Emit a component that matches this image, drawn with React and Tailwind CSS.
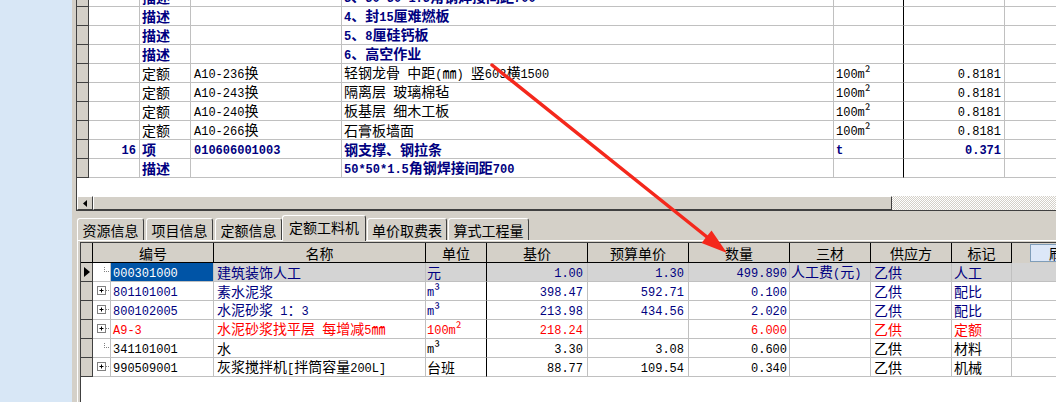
import React from "react";

const topRows = [
  { type: "描述", name: "3、50*50*1.5角钢焊接间距700", bold: true },
  { type: "描述", name: "4、封15厘难燃板", bold: true },
  { type: "描述", name: "5、8厘硅钙板", bold: true },
  { type: "描述", name: "6、高空作业", bold: true },
  { type: "定额", code: "A10-236换", name: "轻钢龙骨 中距(㎜) 竖603横1500", unit: "100m²", qty: "0.8181" },
  { type: "定额", code: "A10-243换", name: "隔离层 玻璃棉毡", unit: "100m²", qty: "0.8181" },
  { type: "定额", code: "A10-240换", name: "板基层 细木工板", unit: "100m²", qty: "0.8181" },
  { type: "定额", code: "A10-266换", name: "石膏板墙面", unit: "100m²", qty: "0.8181" },
  { num: "16", type: "项", code: "010606001003", name: "钢支撑、钢拉条", unit: "t", qty: "0.371", bold: true },
  { type: "描述", name: "50*50*1.5角钢焊接间距700", bold: true },
];

const botRows = [
  { tree: "leaf", code: "000301000", name: "建筑装饰人工", unit: "元", base: "1.00", price: "1.30", qty: "499.890", sancai: "人工费(元)", sup: "乙供", mark: "人工", color: "navy", selected: true },
  { tree: "plus", code: "801101001", name: "素水泥浆", unit: "m³", base: "398.47", price: "592.71", qty: "0.100", sup: "乙供", mark: "配比", color: "navy" },
  { tree: "plus", code: "800102005", name: "水泥砂浆 1：3", unit: "m³", base: "213.98", price: "434.56", qty: "2.020", sup: "乙供", mark: "配比", color: "navy" },
  { tree: "plus", code: "A9-3", name: "水泥砂浆找平层 每增减5㎜", unit: "100m²", base: "218.24", price: "", qty: "6.000", sup: "乙供", mark: "定额", color: "red" },
  { tree: "leaf", code: "341101001", name: "水", unit: "m³", base: "3.30", price: "3.08", qty: "0.600", sup: "乙供", mark: "材料", color: "black" },
  { tree: "plus", code: "990509001", name: "灰浆搅拌机[拌筒容量200L]", unit: "台班", base: "88.77", price: "109.54", qty: "0.340", sup: "乙供", mark: "机械", color: "black" },
];

const colors = {
  navy: "text-[#000080]",
  red: "text-[#ff0000]",
  black: "text-black",
};

// ascii runs in a narrow mono face, the rest in the CJK face
function Txt({ s }) {
  if (!s) return null;
  return (
    <span className="leading-[16px]">
      {s
        .split(/([\x20-\x7e]+)/)
        .filter(Boolean)
        .map((p, i) =>
          /^[\x20-\x7e]+$/.test(p) ? (
            <span key={i} className="font-['Liberation_Mono'] text-[12px]">
              {p}
            </span>
          ) : (
            <span key={i}>{p}</span>
          )
        )}
    </span>
  );
}

const cell = "flex shrink-0 items-center whitespace-pre border-r border-b border-[#c0c0c0]";

function TopRow({ r }) {
  return (
    <div className={`flex h-[19px] shrink-0 ${r.bold ? "font-bold text-[#000080]" : "text-black"}`}>
      <div className="w-[12px] shrink-0 border-r border-b border-[#404040] bg-[#d4d0c8]" />
      <div className={`${cell} w-[51px] justify-end pr-[3px]`}>
        <Txt s={r.num} />
      </div>
      <div className={`${cell} w-[51px] pl-[2px]`}>
        <Txt s={r.type} />
      </div>
      <div className={`${cell} w-[151px] pl-[3px]`}>
        <Txt s={r.code} />
      </div>
      <div className={`${cell} w-[492px] pl-[2px]`}>
        <Txt s={r.name} />
      </div>
      <div className={`${cell} w-[70px] border-r-black pl-[2px]`}>
        <Txt s={r.unit} />
      </div>
      <div className={`${cell} w-[101px] justify-end pr-[3px]`}>
        <Txt s={r.qty} />
      </div>
      <div className="flex-1 border-b border-[#c0c0c0]" />
    </div>
  );
}

function ScrollBar() {
  return (
    <div className="flex h-[14px] shrink-0">
      <div className="flex w-[16px] shrink-0 items-center justify-center border border-t-white border-l-white border-r-[#404040] border-b-[#404040] bg-[#d4d0c8]">
        <svg width="4" height="7" viewBox="0 0 4 7">
          <polygon points="4,0 0,3.5 4,7" fill="#000" />
        </svg>
      </div>
      <div className="w-[799px] shrink-0 border border-t-white border-l-white border-r-[#404040] border-b-[#404040] bg-[#d4d0c8]" />
      <div className="flex-1 bg-[repeating-conic-gradient(#d4d0c8_0%_25%,#ffffff_0%_50%)] bg-[length:2px_2px]" />
    </div>
  );
}

function TopGrid() {
  return (
    <div className="flex h-[211px] shrink-0 flex-col border-l border-b border-[#404040]">
      <div className="h-[196px] shrink-0 overflow-hidden bg-white">
        <div className="-mt-[12px] flex flex-col">
          {topRows.map((r, i) => (
            <TopRow key={i} r={r} />
          ))}
        </div>
      </div>
      <ScrollBar />
    </div>
  );
}

const tabs = [
  { label: "资源信息", w: "w-[67px]", ml: "ml-0" },
  { label: "项目信息", w: "w-[67px]", ml: "ml-[2px]" },
  { label: "定额信息", w: "w-[67px]", ml: "ml-[2px]" },
  { label: "定额工料机", w: "w-[84px]", ml: "ml-0", active: true },
  { label: "单价取费表", w: "w-[80px]", ml: "ml-[1px]" },
  { label: "算式工程量", w: "w-[81px]", ml: "ml-[1px]" },
];

function Tabs() {
  return (
    <div className="flex h-[29px] shrink-0 items-end pl-[1px]">
      {tabs.map((t) => (
        <div
          key={t.label}
          className={`flex ${t.w} ${t.ml} shrink-0 items-center justify-center rounded-t-[3px] border-t border-l border-r border-t-white border-l-white border-r-[#404040] bg-[#d4d0c8] text-black ${
            t.active ? "relative z-10 -mb-[1px] h-[26px] pb-[3px]" : "h-[22px]"
          }`}
        >
          {t.label}
        </div>
      ))}
    </div>
  );
}

const hcell = "flex shrink-0 items-center justify-center border-r border-b border-black";

function Header() {
  return (
    <div className="flex h-[20px] shrink-0 bg-[#d4d0c8] text-black">
      <div className={`${hcell} w-[12px]`} />
      <div className={`${hcell} w-[121px]`}>编号</div>
      <div className={`${hcell} w-[212px]`}>名称</div>
      <div className={`${hcell} w-[61px]`}>单位</div>
      <div className={`${hcell} w-[101px]`}>基价</div>
      <div className={`${hcell} w-[101px]`}>预算单价</div>
      <div className={`${hcell} w-[101px]`}>数量</div>
      <div className={`${hcell} w-[81px]`}>三材</div>
      <div className={`${hcell} w-[81px]`}>供应方</div>
      <div className={`${hcell} w-[60px]`}>标记</div>
      <div className="flex flex-1 items-start overflow-hidden pl-[18px] pt-[1px]">
        <div className="flex h-[18px] w-[60px] shrink-0 items-center border border-[#7f9db9] bg-[#dce7f8] pl-[18px] text-black">
          刷新
        </div>
      </div>
    </div>
  );
}

function TreeMark({ kind }) {
  return (
    <svg width="17" height="18" viewBox="0 0 17 18">
      {kind === "plus" ? (
        <g>
          <rect x="4.5" y="4.5" width="8" height="8" fill="#fff" stroke="#808080" />
          <line x1="6.5" y1="8.5" x2="10.5" y2="8.5" stroke="#000" />
          <line x1="8.5" y1="6.5" x2="8.5" y2="10.5" stroke="#000" />
          <line x1="13" y1="8.5" x2="17" y2="8.5" stroke="#808080" strokeDasharray="1 1" />
        </g>
      ) : (
        <g>
          <line x1="11.5" y1="4" x2="11.5" y2="9" stroke="#808080" strokeDasharray="1 1" />
          <line x1="11" y1="8.5" x2="17" y2="8.5" stroke="#808080" strokeDasharray="1 1" />
        </g>
      )}
    </svg>
  );
}

function BotRow({ r }) {
  const bg = r.selected ? "bg-[#d4d4d4]" : "";
  return (
    <div className={`flex h-[19px] shrink-0 ${colors[r.color]}`}>
      <div className="flex w-[12px] shrink-0 items-center justify-center border-r border-b border-[#404040] bg-[#d4d0c8]">
        {r.selected && (
          <svg width="6" height="10" viewBox="0 0 6 10">
            <polygon points="0,0 6,5 0,10" fill="#000" />
          </svg>
        )}
      </div>
      <div className={`${cell} w-[18px]`}>
        <TreeMark kind={r.tree} />
      </div>
      <div className={`${cell} w-[103px] pl-[2px] ${r.selected ? "bg-[#0054a6] text-white" : ""}`}>
        <Txt s={r.code} />
      </div>
      <div className={`${cell} w-[212px] pl-[3px] ${bg}`}>
        <Txt s={r.name} />
      </div>
      <div className={`${cell} w-[61px] border-r-black pl-[1px] ${bg}`}>
        <Txt s={r.unit} />
      </div>
      <div className={`${cell} w-[101px] justify-end pr-[4px] ${bg}`}>
        <Txt s={r.base} />
      </div>
      <div className={`${cell} w-[101px] justify-end pr-[4px] ${bg}`}>
        <Txt s={r.price} />
      </div>
      <div className={`${cell} w-[101px] justify-end pr-[2px] ${bg}`}>
        <Txt s={r.qty} />
      </div>
      <div className={`${cell} w-[81px] pl-[1px] ${bg}`}>
        <Txt s={r.sancai} />
      </div>
      <div className={`${cell} w-[81px] pl-[3px] ${bg}`}>
        <Txt s={r.sup} />
      </div>
      <div className={`${cell} w-[60px] pl-[2px] ${bg}`}>
        <Txt s={r.mark} />
      </div>
      <div className={`flex-1 border-b border-[#c0c0c0] ${bg}`} />
    </div>
  );
}

function LowerPanel() {
  return (
    <div className="flex min-h-0 flex-1 flex-col">
      <Tabs />
      <div className="ml-[1px] flex min-h-0 flex-1 flex-col border-t border-l border-white pl-[2px] pt-[1px]">
        <div className="flex min-h-0 flex-1 flex-col overflow-hidden border-t border-l border-[#404040] bg-white">
          <Header />
          {botRows.map((r) => (
            <BotRow key={r.code} r={r} />
          ))}
        </div>
      </div>
    </div>
  );
}

function Arrow() {
  return (
    <svg className="pointer-events-none absolute left-0 top-0" width="1056" height="402" viewBox="0 0 1056 402">
      <line x1="492" y1="65" x2="712" y2="241" stroke="#f4281c" strokeWidth="3.5" strokeLinecap="round" />
      <polygon points="727,253 701.5,243 711.5,230.5" fill="#f4281c" />
    </svg>
  );
}

export default function App() {
  return (
    <div className="relative flex h-[402px] w-[1056px] overflow-hidden bg-[#d4d0c8] font-['Noto_Sans_CJK_SC',sans-serif] text-[14px] leading-[18px]">
      <div className="w-[72px] shrink-0 bg-[#d8e7f6]" />
      <div className="flex min-w-0 flex-1 flex-col pl-[4px]">
        <TopGrid />
        <LowerPanel />
      </div>
      <Arrow />
    </div>
  );
}
